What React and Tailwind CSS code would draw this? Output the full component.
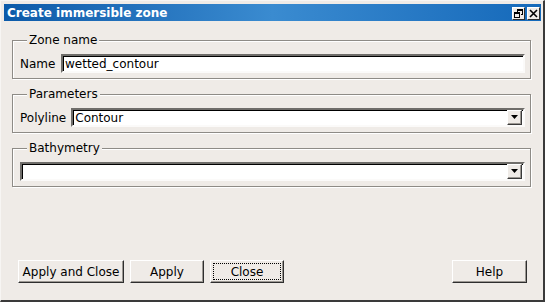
const font = "font-['DejaVu_Sans','Liberation_Sans',sans-serif]";

// sunken white field
const Field = ({ className = '', children }) => (
    <div className={`h-[19px] bg-white border-2 border-t-[#6f6d6a] border-l-[#6f6d6a] border-b-[#fbfaf9] border-r-[#fbfaf9] shadow-[inset_1px_1px_0_#000] flex items-center ${className}`}>
        {children}
    </div>
);

const Combo = ({ value = '', className = '' }) => (
    <Field className={`pl-[2px] pr-[1px] ${className}`}>
        <span className="flex-1 leading-[14px] text-black">{value}</span>
        <div className="w-[15px] h-[15px] bg-[#efebe7] border border-t-[#fff] border-l-[#fff] border-b-[#3a3a3a] border-r-[#3a3a3a] shadow-[inset_-1px_-1px_0_#9c9893] flex items-center justify-center">
            <svg width="8" height="5" viewBox="0 0 8 5">
                <path d="M0 0H7L3.5 4Z" fill="#000" />
            </svg>
        </div>
    </Field>
);

const Group = ({ title, children }) => (
    <fieldset className="w-[519px] ml-[8px] border border-[#8e8b86] shadow-[1px_1px_0_#fff,inset_1px_1px_0_#fff] pt-[7px] pb-[5px] pl-[7px] pr-[5px]">
        <legend className="ml-[7px] px-[2px] leading-[14px] bg-[#efebe7] text-black">{title}</legend>
        {children}
    </fieldset>
);

const Button = ({ label, width, focused = false }) => (
    <button className={`${width} h-[23px] bg-[#efebe7] border border-t-[#fff] border-l-[#fff] border-b-[#2e2e2e] border-r-[#2e2e2e] shadow-[inset_-1px_-1px_0_#9c9893] flex items-center justify-center p-[2px] text-black leading-[14px]`}>
        <span className={`w-full h-full flex items-center justify-center ${focused ? 'border border-dotted border-black' : ''}`}>
            {label}
        </span>
    </button>
);

const TitleButton = ({ children }) => (
    <div className="w-[13px] h-[13px] bg-[#efebe7] border border-t-[#fff] border-l-[#fff] border-b-[#2e2e2e] border-r-[#2e2e2e] flex items-center justify-center">
        {children}
    </div>
);

export default function App() {
    return (
        <div className={`w-[545px] h-[302px] bg-[#efebe7] border-t border-l border-t-[#f7f5f3] border-l-[#f7f5f3] border-r-2 border-b-2 border-r-[#3a3a3a] border-b-[#3a3a3a] flex flex-col pt-[3px] pl-[3px] pr-[2px] pb-[17px] text-[12px] ${font}`}>
            <div className="h-[17px] w-[537px] bg-linear-to-r from-[#0b5aa9] via-[#3a8bd0] to-[#1469ba] flex items-center justify-between pl-[3px] pr-[1px]">
                <span className="text-white font-bold leading-[14px]">Create immersible zone</span>
                <div className="flex gap-[2px] pt-[1px]">
                    <TitleButton>
                        <svg width="9" height="9" viewBox="0 0 9 9" shapeRendering="crispEdges">
                            <path d="M3 0.5H8.5V5.5H6.5M3 0.5V2.5M3 1.5H8.5" stroke="#000" fill="none" />
                            <rect x="0.5" y="3.5" width="5" height="5" stroke="#000" fill="none" />
                            <path d="M0.5 4.5H5.5" stroke="#000" />
                        </svg>
                    </TitleButton>
                    <TitleButton>
                        <svg width="9" height="9" viewBox="0 0 9 9">
                            <path d="M1 1L8 8M8 1L1 8" stroke="#000" strokeWidth="1.6" />
                        </svg>
                    </TitleButton>
                </div>
            </div>

            <div className="flex flex-col gap-[8px] mt-[12px]">
                <Group title="Zone name">
                    <div className="flex items-center gap-[6px]">
                        <span className="w-[35px] leading-[14px]">Name</span>
                        <Field className="flex-1 pl-[2px]">
                            <span className="leading-[14px] text-black">wetted_contour</span>
                        </Field>
                    </div>
                </Group>

                <Group title="Parameters">
                    <div className="flex items-center gap-[5px]">
                        <span className="leading-[14px]">Polyline</span>
                        <Combo value="Contour" className="flex-1" />
                    </div>
                </Group>

                <Group title="Bathymetry">
                    <Combo className="w-full" />
                </Group>
            </div>

            <div className="mt-auto flex items-center pl-[14px] pr-[14px]">
                <div className="flex gap-[6px]">
                    <Button label="Apply and Close" width="w-[106px]" />
                    <Button label="Apply" width="w-[74px]" />
                    <Button label="Close" width="w-[74px]" focused />
                </div>
                <div className="ml-auto">
                    <Button label="Help" width="w-[75px]" />
                </div>
            </div>
        </div>
    );
}
